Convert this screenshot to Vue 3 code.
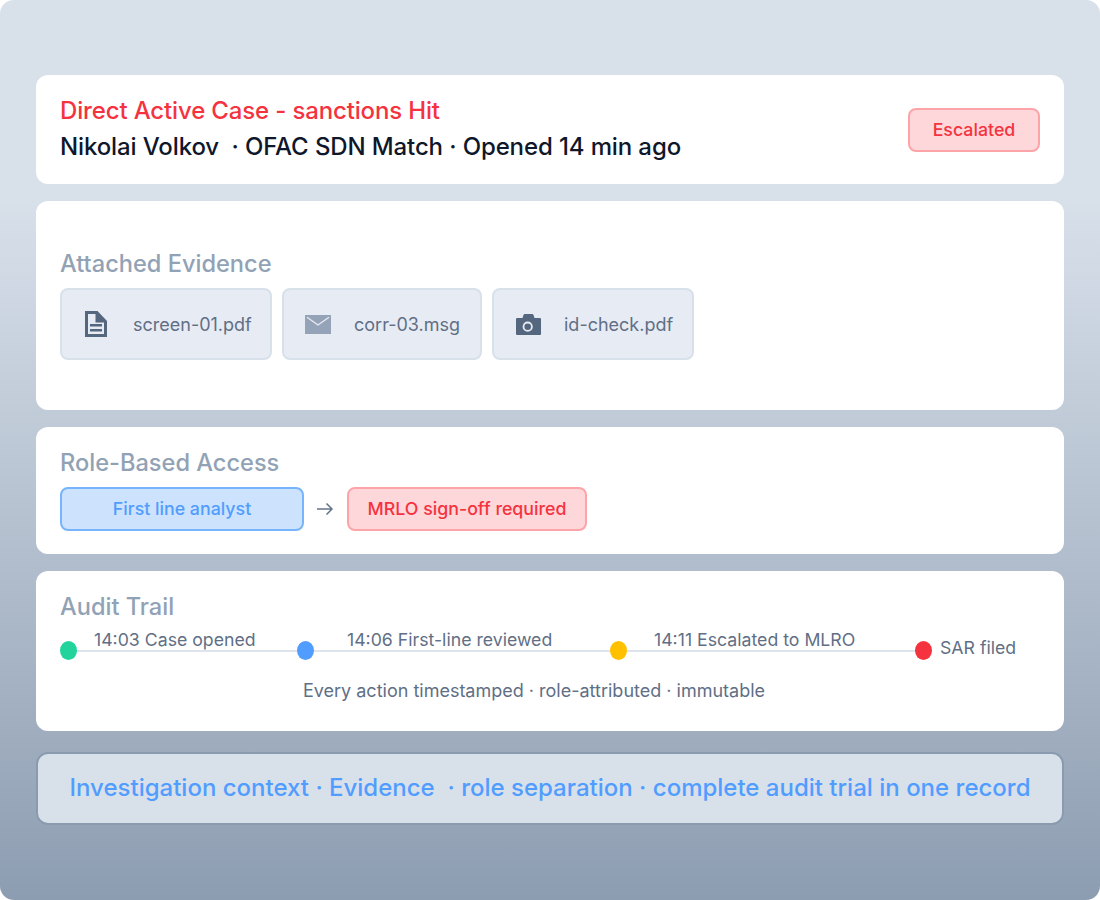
<template>
  <div class="page">
    <section class="card case">
      <div class="case-text">
        <div class="case-title">Direct Active Case - sanctions Hit</div>
        <div class="case-sub">Nikolai Volkov &nbsp;· OFAC SDN Match · Opened 14 min ago</div>
      </div>
      <span class="pill red status">Escalated</span>
    </section>

    <section class="card evidence">
      <h2>Attached Evidence</h2>
      <div class="files">
        <div v-for="f in files" :key="f.name" class="file" :class="f.cls">
          <svg v-if="f.icon === 'doc'" class="icon" viewBox="0 0 22 26">
            <path fill="#55667f" fill-rule="evenodd" d="M0 0h12.500L22 10v16H0zM3 3v20h16V11.500h-8.500V3z" />
            <path fill="#55667f" d="M5 13h12v2.600H5zM5 18h12v2.600H5z" />
          </svg>
          <svg v-else-if="f.icon === 'mail'" class="icon" viewBox="0 0 26 19">
            <path fill="#94a3b8" d="M0 0h26v19H0z" />
            <path fill="none" stroke="#e7ebf3" stroke-width="1.400" d="M2 2.300l11 7.700 11-7.700" />
          </svg>
          <svg v-else class="icon" viewBox="0 0 25 21">
            <path fill="#55667f" d="M1 4h5.500L7.500 1q.3-1 1.300-1h7.400q1 0 1.300 1l1 3H24q1 0 1 1v15q0 1-1 1H1q-1 0-1-1V5q0-1 1-1z" />
            <circle cx="11.700" cy="12.700" r="4.200" fill="none" stroke="#e7ebf3" stroke-width="1.800" />
          </svg>
          <span>{{ f.name }}</span>
        </div>
      </div>
    </section>

    <section class="card access">
      <h2>Role-Based Access</h2>
      <div class="roles">
        <span class="pill blue analyst">First line analyst</span>
        <svg class="arrow" viewBox="0 0 18 14">
          <path fill="none" stroke="#64748b" stroke-width="1.500" d="M1 7h15M10.500 1.500L16 7l-5.500 5.500" />
        </svg>
        <span class="pill red signoff">MRLO sign-off required</span>
      </div>
    </section>

    <section class="card audit">
      <h2>Audit Trail</h2>
      <div class="trail">
        <div v-for="s in steps" :key="s.label" class="step" :class="s.cls">
          <i class="dot" :style="{ background: s.color }"></i>
          <div class="seg"><span>{{ s.label }}</span></div>
        </div>
        <div class="step last">
          <i class="dot" style="background: #f5333f"></i>
          <span>SAR filed</span>
        </div>
      </div>
      <p class="note">Every action timestamped · role-attributed · immutable</p>
    </section>

    <div class="summary">Investigation context · Evidence &nbsp;· role separation · complete audit trial in one record</div>
  </div>
</template>

<script setup>
const files = [
  { name: 'screen-01.pdf', icon: 'doc', cls: 'f1' },
  { name: 'corr-03.msg', icon: 'mail', cls: 'f2' },
  { name: 'id-check.pdf', icon: 'cam', cls: 'f3' }
]

const steps = [
  { label: '14:03 Case opened', color: '#22d39b', cls: 's1' },
  { label: '14:06 First-line reviewed', color: '#519dff', cls: 's2' },
  { label: '14:11 Escalated to MLRO', color: '#ffc000', cls: 's3' }
]
</script>

<style>
html, body { margin: 0; background: #fff; }
</style>

<style scoped>
.page {
  box-sizing: border-box;
  width: 1100px;
  height: 900px;
  padding: 75px 36px 0;
  border-radius: 14px;
  background: linear-gradient(180deg, #d8e0ea 0%, #d8e0ea 22%, #8d9db1 100%);
  font-family: Inter, "Liberation Sans", sans-serif;
  color: #5f6f86;
  overflow: hidden;
}

.card {
  box-sizing: border-box;
  margin-bottom: 17px;
  padding: 0 24px;
  background: #fff;
  border-radius: 12px;
}

h2 {
  margin: 0;
  font-size: 23.600px;
  font-weight: 500;
  line-height: 28px;
  color: #92a2b5;
}

.pill {
  box-sizing: border-box;
  display: flex;
  align-items: center;
  justify-content: center;
  height: 44px;
  padding-bottom: 1px;
  border-radius: 8px;
  font-size: 17.800px;
  font-weight: 500;
}
.pill.red { background: #fed7da; border: 2px solid #fda4a9; color: #f5333f; }
.pill.blue { background: #cce2fd; border: 2px solid #76b4fd; color: #519dff; }

/* header */
.case {
  display: flex;
  align-items: center;
  justify-content: space-between;
  height: 109px;
}
.case-text { padding-bottom: 2px; }
.case-title {
  font-size: 24px;
  font-weight: 500;
  letter-spacing: -0.15px;
  line-height: 36px;
  color: #f5333f;
}
.case-sub {
  font-size: 24px;
  font-weight: 500;
  letter-spacing: -0.12px;
  line-height: 36px;
  color: #0f172a;
}
.status { width: 132px; }

/* evidence */
.evidence { height: 209px; padding-top: 49px; }
.files { display: flex; gap: 10px; margin-top: 10px; }
.file {
  box-sizing: border-box;
  display: flex;
  align-items: center;
  height: 72px;
  border: 2px solid #d8e0ea;
  border-radius: 8px;
  background: #e7ebf3;
  font-size: 18px;
}
.f1 { width: 212px; padding-left: 23px; }
.f2 { width: 200px; padding-left: 21px; }
.f3 { width: 202px; padding-left: 22px; }
.f1 .icon { width: 22px; height: 26px; margin-right: 26px; }
.f2 .icon { width: 26px; height: 19px; margin-right: 23px; }
.f3 .icon { width: 25px; height: 21px; margin-right: 23px; }

/* access */
.access { height: 127px; padding-top: 22px; }
.roles { display: flex; align-items: center; margin-top: 10px; }
.analyst { width: 244px; }
.signoff { width: 240px; }
.arrow { width: 18px; height: 14px; margin: 0 13px 0 12px; }

/* audit */
.audit { height: 160px; padding-top: 22px; margin-bottom: 21px; }
.trail { display: flex; margin-top: 8px; font-size: 17.700px; line-height: 22px; }
.step { display: flex; align-items: flex-end; }
.s1 { width: 237px; }
.s2 { width: 313px; }
.s3 { width: 305px; }
.dot {
  flex: none;
  width: 17px;
  height: 19px;
  border-radius: 50%;
  margin-bottom: -8px;
  z-index: 1;
}
.seg {
  flex: 1;
  height: 21px;
  border-bottom: 2px solid #dde4ee;
  white-space: nowrap;
}
.s1 .seg { padding-left: 17px; }
.s2 .seg { padding-left: 33px; }
.s3 .seg { padding-left: 27px; }
.last { gap: 8px; }
.last span { margin-bottom: -7px; white-space: nowrap; }
.note {
  margin: 27px 0 0;
  padding-right: 32px;
  text-align: center;
  font-size: 18px;
  line-height: 24px;
}

/* bottom strip */
.summary {
  box-sizing: border-box;
  display: flex;
  align-items: center;
  justify-content: center;
  height: 73px;
  padding-bottom: 2px;
  border: 2px solid #8a9bb0;
  border-radius: 12px;
  background: #d8e0ea;
  color: #519dff;
  font-size: 24px;
  font-weight: 500;
  white-space: nowrap;
}
</style>
